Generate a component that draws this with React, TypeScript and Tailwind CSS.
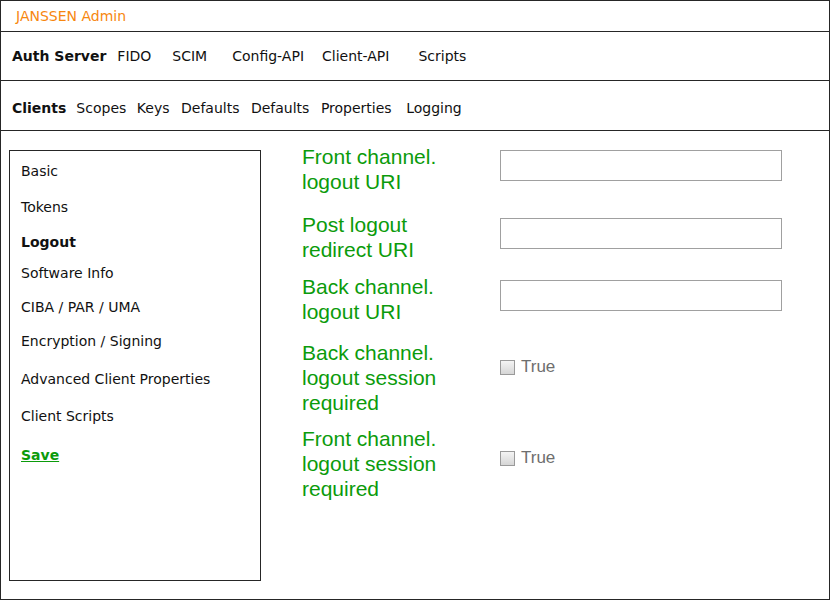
import React from "react";

const nav = "font-['DejaVu_Sans',Verdana,sans-serif] text-[14px] leading-[17px] text-[#111]";
const lbl = "font-['Liberation_Sans',Arial,sans-serif] text-[21px] leading-[25px] text-[#0b9b0b]";

function Checkbox() {
  return (
    <div className="flex items-center">
      <div className="w-[15px] h-[15px] border border-[#9a9a9a] bg-gradient-to-b from-[#f4f4f4] to-[#d6d6d6]" />
      <span className="ml-[6px] font-['Liberation_Sans',Arial,sans-serif] text-[17px] leading-[20px] text-[#6e6e6e]">True</span>
    </div>
  );
}

function Input() {
  return <div className="w-[282px] h-[31px] border border-[#a0a0a0] bg-white" />;
}

export default function App() {
  return (
    <div className="w-[831px] h-[601px] bg-white">
      <div className="w-[830px] h-[600px] border border-[#262626] flex flex-col">
        <div className="h-[31px] shrink-0 border-b border-[#262626] pl-[15px] pt-[2px]">
          <span className="font-['DejaVu_Sans',Verdana,sans-serif] text-[14px] leading-[17px] text-[#f7870f]">JANSSEN Admin</span>
        </div>
        <div className={`h-[49px] shrink-0 border-b border-[#262626] flex items-center pl-[11px] ${nav}`}>
          <span className="font-bold">Auth Server</span>
          <span className="ml-[11px]">FIDO</span>
          <span className="ml-[21px]">SCIM</span>
          <span className="ml-[25px]">Config-API</span>
          <span className="ml-[18px]">Client-API</span>
          <span className="ml-[29px]">Scripts</span>
        </div>
        <div className={`h-[50px] shrink-0 border-b border-[#262626] flex items-center pl-[11px] pt-[6px] ${nav}`}>
          <span className="font-bold">Clients</span>
          <span className="ml-[10px]">Scopes</span>
          <span className="ml-[10.5px]">Keys</span>
          <span className="ml-[11.5px]">Defaults</span>
          <span className="ml-[11.5px]">Defaults</span>
          <span className="ml-[11.5px]">Properties</span>
          <span className="ml-[14.5px]">Logging</span>
        </div>
        <div className="flex-1 flex">
          <div className="pl-[8px] pt-[19px]">
            <div className={`w-[252px] h-[431px] border border-[#262626] pl-[11px] pt-[12px] flex flex-col ${nav}`}>
              <span>Basic</span>
              <span className="mt-[19px]">Tokens</span>
              <span className="mt-[18px] font-bold">Logout</span>
              <span className="mt-[14px]">Software Info</span>
              <span className="mt-[17px]">CIBA / PAR / UMA</span>
              <span className="mt-[17px]">Encryption / Signing</span>
              <span className="mt-[21px]">Advanced Client Properties</span>
              <span className="mt-[20px]">Client Scripts</span>
              <span className="mt-[22px] font-bold text-[#0b9b0b] underline">Save</span>
            </div>
          </div>
          <div className="ml-[41px] pt-[13px] flex flex-col">
            <div className="flex">
              <div className={`w-[198px] ${lbl}`}>Front channel.<br />logout URI</div>
              <div className="mt-[6px]"><Input /></div>
            </div>
            <div className="flex mt-[18px]">
              <div className={`w-[198px] ${lbl}`}>Post logout<br />redirect URI</div>
              <div className="mt-[6px]"><Input /></div>
            </div>
            <div className="flex mt-[12px]">
              <div className={`w-[198px] ${lbl}`}>Back channel.<br />logout URI</div>
              <div className="mt-[6px]"><Input /></div>
            </div>
            <div className="flex mt-[16px]">
              <div className={`w-[198px] ${lbl}`}>Back channel.<br />logout session<br />required</div>
              <div className="mt-[17px]"><Checkbox /></div>
            </div>
            <div className="flex mt-[11px]">
              <div className={`w-[198px] ${lbl}`}>Front channel.<br />logout session<br />required</div>
              <div className="mt-[22px]"><Checkbox /></div>
            </div>
          </div>
        </div>
      </div>
    </div>
  );
}
